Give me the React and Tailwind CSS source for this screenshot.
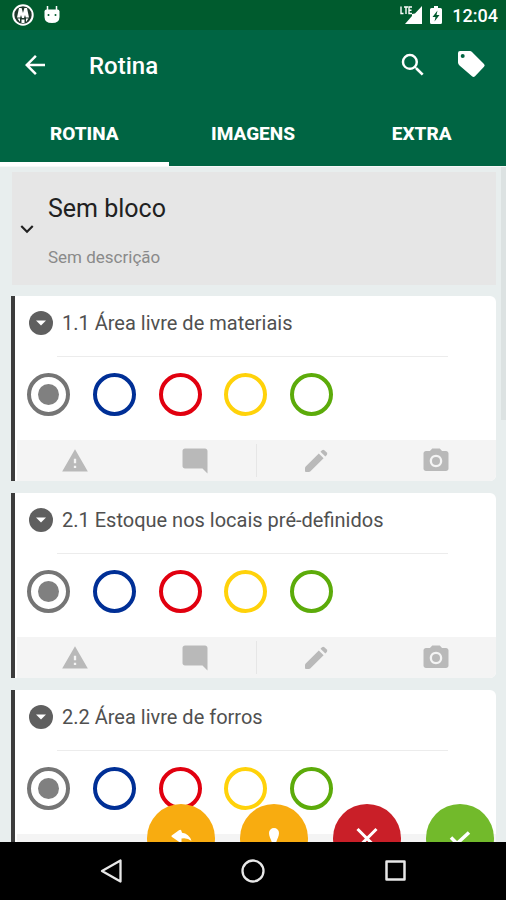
import React, { useState } from 'react'
import {
  MdArrowBack,
  MdSearch,
  MdKeyboardArrowDown,
  MdWarning,
  MdModeComment,
  MdPhotoCamera,
} from 'react-icons/md'

const tabs = ['ROTINA', 'IMAGENS', 'EXTRA']

const items = [
  { id: '1.1', title: '1.1 Área livre de materiais' },
  { id: '2.1', title: '2.1 Estoque nos locais pré-definidos' },
  { id: '2.2', title: '2.2 Área livre de forros' },
]

const options = [
  { name: 'Cinza', className: 'border-[#757575] before:bg-[#808080]' },
  { name: 'Azul', className: 'border-[#002f96] before:bg-[#002f96]' },
  { name: 'Vermelho', className: 'border-[#e1000f] before:bg-[#e1000f]' },
  { name: 'Amarelo', className: 'border-[#ffd20a] before:bg-[#ffd20a]' },
  { name: 'Verde', className: 'border-[#5cab0a] before:bg-[#5cab0a]' },
]

function StatusBar() {
  return (
    <div className="flex h-[30px] shrink-0 items-center justify-between bg-[#005b2e] pr-2 pl-3 text-white">
      <div className="flex items-center gap-2">
        <svg viewBox="0 0 22 22" className="size-[22px]">
          <circle cx="11" cy="11" r="9.7" fill="#20382c" stroke="#fff" strokeWidth="2" />
          <path d="M7 4h2.600L11 9l1.400-5H15l2 9.500h-3.200L13 11l-1 3h-2l-1-3-.8 2.500H5z" fill="#fff" />
          <path d="M5.500 14.500h2.500V18zM9.500 15.500h3V19h-3zM14 14.500h2.500L14 18z" fill="#fff" />
        </svg>
        <svg viewBox="0 0 20 22" className="h-[22px] w-5" fill="#fff">
          <path d="M5.500 2v4M14.500 2v4" stroke="#fff" strokeWidth="1.500" />
          <path d="M2.500 7.500Q2.500 5.500 4.500 5.500h11q2 0 2 2V13q0 6-7.500 6t-7.500-6z" />
          <circle cx="6.500" cy="11" r="1" fill="#005b2e" />
          <circle cx="13.500" cy="11" r="1" fill="#005b2e" />
        </svg>
      </div>
      <div className="flex items-center gap-2">
        <svg viewBox="0 0 22 20" className="h-5 w-[22px]" fill="#fff">
          <path d="M22 1v18H5l7-8V9l3-.500z" />
          <path d="M1 1.500v7h2.500M4 2h4M6 2v7M12 2H9v6.500h3M9 5.200h2.500" fill="none" stroke="#fff" strokeWidth="1.400" />
        </svg>
        <svg viewBox="0 0 12 20" className="mr-0.5 h-5 w-3">
          <path d="M4 1h4v2h2.500Q12 3 12 4.500v13q0 1.500-1.500 1.500h-9Q0 19 0 17.500v-13Q0 3 1.500 3H4z" fill="#fff" />
          <path d="M7.500 5.500L2.500 12H5.500l-1 4.500L9.500 10H6.500z" fill="#005b2e" />
        </svg>
        <span className="pt-0.5 text-[18px] leading-6 font-medium">12:04</span>
      </div>
    </div>
  )
}

function Header({ active, onChange }) {
  return (
    <header className="shrink-0 bg-[#006543] text-white">
      <div className="flex h-[70px] items-center px-5">
        <button type="button" aria-label="Voltar">
          <MdArrowBack className="size-[30px]" />
        </button>
        <h1 className="ml-[39px] flex-1 pt-0.5 text-2xl font-medium">Rotina</h1>
        <button type="button" aria-label="Buscar" className="mr-7">
          <MdSearch className="size-[30px]" />
        </button>
        <button type="button" aria-label="Etiquetas">
          <svg viewBox="0 0 30 30" className="size-[30px]">
            <path
              d="M4 1h10q1 0 2 1l12 12q1.400 1.400 0 2.800l-9 9.400q-1.500 1.400-3 0L3.500 15.500Q2 14 2 12.500V3q0-2 2-2z"
              fill="#fff"
            />
            <circle cx="6.700" cy="6" r="2" fill="#006543" />
          </svg>
        </button>
      </div>
      <nav className="grid h-[66px] grid-cols-3">
        {tabs.map((tab) => (
          <button
            key={tab}
            type="button"
            onClick={() => onChange(tab)}
            className={
              'border-b-4 pt-1.5 text-[19px] leading-6 font-extrabold ' +
              (tab === active ? 'border-white' : 'border-transparent')
            }
          >
            {tab}
          </button>
        ))}
      </nav>
    </header>
  )
}

function ActionButton({ label, children }) {
  return (
    <button type="button" aria-label={label} className="flex items-center justify-center">
      {children}
    </button>
  )
}

function ItemCard({ item }) {
  return (
    <section className="h-[185px] rounded-r-md border-l-4 border-[#3c3c3c] bg-white">
      <div className="flex h-[60px] items-center gap-[9px] pr-4 pb-1.5 pl-3.5">
        <button type="button" aria-label="Expandir">
          <svg viewBox="0 0 24 24" className="size-6">
            <circle cx="12" cy="12" r="12" fill="#5f5f5f" />
            <path d="M7 9.500h10l-5 5z" fill="#fff" />
          </svg>
        </button>
        <h3 className="text-[20px] leading-6 text-[#505050]">{item.title}</h3>
      </div>
      <div className="mr-12 ml-[42px] h-px bg-[#ececec]" />
      <div className="flex h-[83px] items-center pb-2 pl-3">
        <div className="flex w-[306px] items-center justify-between">
          {options.map((option, i) => (
            <input
              key={option.name}
              type="radio"
              name={'item-' + item.id}
              aria-label={option.name}
              defaultChecked={i === 0}
              className={
                "flex size-[43px] appearance-none items-center justify-center rounded-full border-4 before:hidden before:size-[21px] before:rounded-full before:content-[''] checked:before:block " +
                option.className
              }
            />
          ))}
        </div>
      </div>
      <div className="relative grid h-[41px] grid-cols-4 rounded-br-md bg-[#f4f4f4] text-[#b9b9b9] shadow-[inset_2px_0_white]">
        <ActionButton label="Alerta">
          <MdWarning className="size-7" />
        </ActionButton>
        <ActionButton label="Comentário">
          <MdModeComment className="size-[30px]" />
        </ActionButton>
        <div className="absolute top-1 bottom-1 left-1/2 w-px bg-[#e6e6e6]" />
        <ActionButton label="Editar">
          <svg viewBox="0 0 24 24" className="size-6" fill="currentColor">
            <path d="M14.800 4.400l4.800 4.800L6.500 22.300q-.7.700-1.700.7H2q-1 0-1-1v-2.800q0-1 .7-1.700z" />
            <path d="M16.500 2.700L18 1.200q1.200-1 2.400 0l2.400 2.400q1 1.200 0 2.400l-1.500 1.500z" />
          </svg>
        </ActionButton>
        <ActionButton label="Foto">
          <MdPhotoCamera className="size-[30px]" />
        </ActionButton>
      </div>
    </section>
  )
}

function Fab({ label, className, children }) {
  return (
    <button
      type="button"
      aria-label={label}
      className={'flex size-[68px] items-center justify-center rounded-full ' + className}
    >
      {children}
    </button>
  )
}

function FloatingButtons() {
  return (
    <div className="absolute right-3 -bottom-[30px] flex gap-[25px]">
      <Fab label="Desfazer" className="bg-[#f8ac10]">
        <svg viewBox="0 0 24 24" className="size-6" fill="#fff">
          <path d="M10 4.200q1.500-1.200 2.300.3l.7 2.300q7 .7 9.500 8.200-4-3.500-10-2.500v3.500q0 1.500-1.500.500l-8-5.500q-1.200-.9 0-1.800z" />
        </svg>
      </Fab>
      <Fab label="Local" className="bg-[#f8ac10]">
        <svg viewBox="0 0 24 24" className="size-6" fill="#fff">
          <path d="M12 2a5 5 0 0 1 5 5c0 3.500-2 6-3 10h-4c-1-4-3-6.500-3-10a5 5 0 0 1 5-5z" />
        </svg>
      </Fab>
      <Fab label="Cancelar" className="bg-[#c91f28]">
        <svg viewBox="0 0 24 24" className="size-6" fill="none" stroke="#fff" strokeWidth="3">
          <path d="M2.500 3l19 19M21.500 3l-19 19" />
        </svg>
      </Fab>
      <Fab label="Confirmar" className="bg-[#72ba2b]">
        <svg viewBox="0 0 24 24" className="size-6" fill="none" stroke="#fff" strokeWidth="3.500">
          <path d="M3 11.500l6 6L21 6.500" />
        </svg>
      </Fab>
    </div>
  )
}

function SystemNav() {
  return (
    <footer className="grid h-[58px] shrink-0 grid-cols-3 bg-black px-10">
      <ActionButton label="Voltar">
        <svg viewBox="0 0 24 24" className="size-6" fill="none" stroke="#e8e8e8" strokeWidth="2.300" strokeLinejoin="round">
          <path d="M21.500 1.500v21L3 12z" />
        </svg>
      </ActionButton>
      <ActionButton label="Início">
        <svg viewBox="0 0 24 24" className="size-6" fill="none" stroke="#e8e8e8" strokeWidth="2.300">
          <circle cx="12" cy="12" r="10.500" />
        </svg>
      </ActionButton>
      <ActionButton label="Recentes">
        <svg viewBox="0 0 24 24" className="size-6" fill="none" stroke="#e8e8e8" strokeWidth="2.500" strokeLinejoin="round">
          <path d="M3.500 2.500h18v18h-18z" />
        </svg>
      </ActionButton>
    </footer>
  )
}

export default function App() {
  const [active, setActive] = useState('ROTINA')

  return (
    <div className="flex h-screen flex-col overflow-hidden bg-[#e8eeee] font-['Roboto',sans-serif]">
      <StatusBar />
      <Header active={active} onChange={setActive} />
      <main className="relative min-h-0 flex-1 overflow-hidden border-t border-[#f6f8f8] pt-[5px] pr-2.5 pl-[11px]">
        <div className="ml-px flex h-[113px] items-center bg-[#e6e6e6] pl-0.5">
          <button type="button" aria-label="Recolher bloco">
            <MdKeyboardArrowDown className="size-[26px] text-[#212121]" />
          </button>
          <div className="flex flex-col gap-5 pt-1 pl-2">
            <h2 className="text-[25px] leading-8 text-[#212121]">Sem bloco</h2>
            <p className="text-[17px] leading-6 text-[#8a8a8a]">Sem descrição</p>
          </div>
        </div>
        <div className="mt-[11px] flex flex-col gap-3">
          {items.map((item) => (
            <ItemCard key={item.id} item={item} />
          ))}
        </div>
        {/* scroll position */}
        <div className="absolute top-0 right-0 h-[253px] w-[5px] bg-[#dce2e2]" />
        <FloatingButtons />
      </main>
      <SystemNav />
    </div>
  )
}
